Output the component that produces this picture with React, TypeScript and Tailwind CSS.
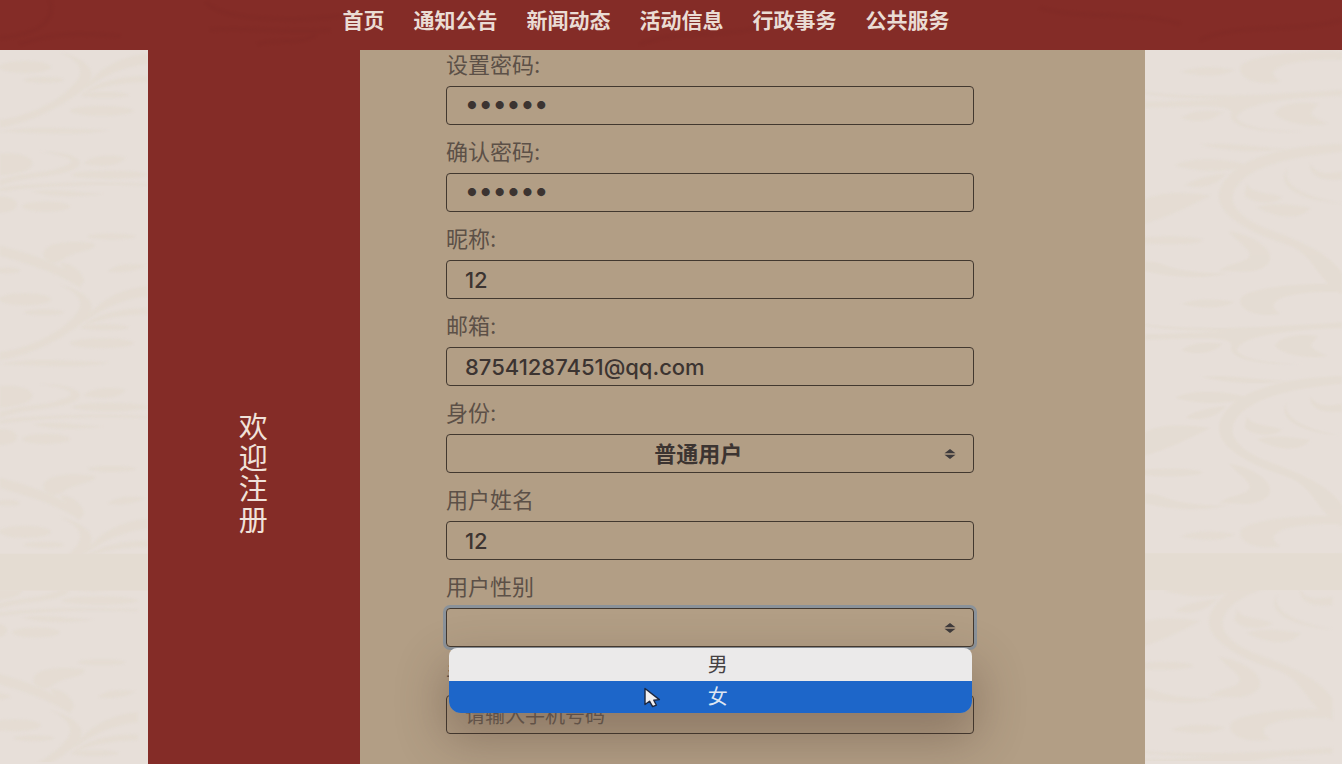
import { useState, type ReactNode } from "react";

const NAV = ["首页", "通知公告", "新闻动态", "活动信息", "行政事务", "公共服务"];

const CONTROL =
  "block h-[39px] w-full rounded border border-[#42382f] bg-transparent text-[#3c3431] outline-none";

function Field({ id, label, children }: { id: string; label: string; children: ReactNode }) {
  return (
    <div className="mb-[13px]">
      <label htmlFor={id} className="mb-[7px] block text-[22px] leading-7 text-[#5c5047]">
        {label}
      </label>
      {children}
    </div>
  );
}

function TextField({
  id,
  label,
  type = "text",
  initial = "",
  placeholder,
}: {
  id: string;
  label: string;
  type?: string;
  initial?: string;
  placeholder?: string;
}) {
  const [value, setValue] = useState(initial);
  const size = type === "password" ? "text-[26px] pb-1" : "text-[22px]";
  return (
    <Field id={id} label={label}>
      <input
        id={id}
        type={type}
        value={value}
        placeholder={placeholder}
        onChange={(e) => setValue(e.target.value)}
        className={`${CONTROL} ${size} px-[18px] font-medium placeholder:text-xl placeholder:font-normal placeholder:text-[#6b5e53]`}
      />
    </Field>
  );
}

function Chevrons() {
  return (
    <svg
      viewBox="0 0 12 12"
      className="pointer-events-none absolute top-1/2 right-[18px] h-3 w-3 -translate-y-1/2 fill-[#3f3b3c]"
      aria-hidden="true"
    >
      <path d="M6 1 11.5 5.2H.5Z" />
      <path d="M6 11 .5 6.8h11Z" />
    </svg>
  );
}

function LeftTile() {
  return (
    <g>
      <ellipse cx="25" cy="67" rx="26" ry="6" />
      <ellipse cx="44" cy="80" rx="20" ry="3" />
      <path d="M60 52C98 62 102 80 72 98C50 114 22 124 0 128V120C28 116 52 104 66 92C86 76 86 64 60 52Z" />
      <path d="M84 90C96 70 120 56 148 54V64C124 66 104 76 84 90Z" />
      <path d="M82 94C100 80 124 76 148 76V82C124 82 104 86 82 94Z" />
      <ellipse cx="105" cy="95" rx="24" ry="3" />
      <ellipse cx="102" cy="111" rx="32" ry="5" />
      <path d="M0 132C30 124 80 130 110 130C90 136 50 134 0 132Z" />
      <path d="M0 154C20 152 36 158 32 166C26 174 10 174 0 176Z" />
      <path d="M40 152C86 152 92 168 60 174C40 178 20 178 0 186V180C24 172 44 174 60 168C82 162 70 156 40 152Z" />
      <path d="M84 164C90 156 110 154 126 158C120 166 104 168 84 164Z" />
      <ellipse cx="110" cy="175" rx="38" ry="4" />
      <path d="M0 188C40 182 100 182 148 184V186C100 184 40 186 0 192Z" />
      <path d="M32 192C60 188 80 194 104 194C80 198 54 198 32 192Z" />
      <ellipse cx="2" cy="205" rx="15" ry="8" />
      <ellipse cx="46" cy="207" rx="24" ry="5" />
      <path d="M44 258C40 244 64 240 94 244C100 250 76 252 66 258C56 266 50 264 44 258Z" />
      <path d="M60 264C72 262 84 274 84 282C74 280 66 272 60 264Z" />
      <ellipse cx="112" cy="237" rx="24" ry="3" />
      <path d="M0 246C30 254 60 264 84 282L80 288C52 270 24 264 0 256Z" />
      <path d="M108 272C116 264 132 264 146 266C136 272 122 274 108 272Z" />
      <ellipse cx="8" cy="271" rx="12" ry="3" />
    </g>
  );
}

function RightTile() {
  return (
    <g>
      <path d="M36 72C50 66 70 66 90 70C76 78 52 76 36 72Z" />
      <path d="M96 66C104 56 150 50 198 52V60C140 58 116 70 136 82C112 86 92 78 96 66Z" />
      <path d="M0 92C40 98 120 96 198 90V96C130 98 96 106 92 118C98 128 130 132 160 132C120 134 86 128 86 116C92 104 60 106 0 108V102C30 102 60 100 80 99C50 99 20 98 0 94Z" />
      <path d="M36 118C48 110 64 110 78 112C68 122 50 124 36 118Z" />
      <path d="M130 114C136 102 160 102 174 104C168 112 158 114 184 124C160 128 138 122 130 114Z" />
      <path d="M56 145C86 142 110 148 144 149C110 154 80 151 56 145Z" />
      <path d="M30 166C44 158 80 158 104 166C80 174 50 172 30 166Z" />
      <path d="M198 144C128 146 78 164 74 196C74 218 108 234 144 246C170 256 170 278 198 296V274C184 252 150 240 124 230C98 220 82 206 90 190C104 164 156 156 198 152Z" />
      <path d="M40 186C52 178 66 176 82 174C72 186 56 190 40 186Z" />
      <path d="M0 200C22 190 46 194 66 196C42 208 22 218 0 224Z" />
      <path d="M102 184C106 194 120 192 138 198C128 206 108 204 100 196Z" />
      <path d="M112 208C126 202 150 206 166 208C160 218 140 222 112 208Z" />
      <path d="M144 168C134 184 160 198 198 204C160 202 128 188 144 168Z" />
      <path d="M166 164C172 176 184 174 198 172V180C180 182 164 178 166 164Z" />
      <ellipse cx="24" cy="241" rx="34" ry="4" />
      <path d="M84 232C110 236 132 252 124 264C112 278 86 270 74 272C84 262 110 264 104 252C98 244 90 240 84 232Z" />
      <path d="M0 262C24 262 18 274 86 274C50 282 18 276 0 272Z" />
    </g>
  );
}

function Texture({ side }: { side: "left" | "right" }) {
  const Tile = side === "left" ? LeftTile : RightTile;
  const width = side === "left" ? 148 : 198;
  return (
    <svg viewBox={`0 50 ${width} 714`} className="block h-auto w-full" fill="#e4dcd2" aria-hidden="true">
      <clipPath id={`${side}-upper`}>
        <rect x="0" y="50" width={width} height="505" />
      </clipPath>
      <clipPath id={`${side}-lower`}>
        <rect x="0" y="592" width={width} height="172" />
      </clipPath>
      <filter id={`${side}-soft`}>
        <feGaussianBlur stdDeviation="1" />
      </filter>
      <g clipPath={`url(#${side}-upper)`} opacity="0.85">
        <g filter={`url(#${side}-soft)`}>
          <Tile />
          <g transform="translate(0 233)">
            <Tile />
          </g>
          <g transform="translate(0 466)">
            <Tile />
          </g>
        </g>
      </g>
      <rect x="0" y="555" width={width} height="37" />
      <g clipPath={`url(#${side}-lower)`} opacity="0.85">
        <g filter={`url(#${side}-soft)`}>
          <g transform="translate(-10 427)">
            <Tile />
          </g>
          <g transform="translate(-10 660)">
            <Tile />
          </g>
        </g>
      </g>
    </svg>
  );
}

export default function App() {
  const [role, setRole] = useState("普通用户");
  const [gender, setGender] = useState("");
  const [open, setOpen] = useState(true);

  const pick = (value: string) => {
    setGender(value);
    setOpen(false);
  };

  return (
    <div className="flex h-screen flex-col overflow-hidden bg-[#e7dfd9] font-[Inter,'Noto_Sans_CJK_SC',sans-serif]">
      <header className="relative h-[50px] shrink-0 bg-[#842c27]">
        <svg
          viewBox="0 0 1342 50"
          preserveAspectRatio="none"
          className="absolute inset-0 h-full w-full fill-none stroke-[#7e2925] opacity-40 blur-[1px]"
          strokeWidth="4"
          aria-hidden="true"
        >
          <path d="M0 38C40 34 56 20 50 0M20 44C60 30 90 34 120 36M206 2C220 20 290 22 340 16M210 30C250 26 280 34 330 30M258 44C280 38 300 46 316 34M640 44C680 28 730 40 780 22M1040 8C1080 20 1140 10 1180 24M1200 40C1240 22 1290 34 1342 20" />
        </svg>
        <nav className="relative flex h-[42px] items-center justify-center gap-[29px] pr-[50px]">
          {NAV.map((item) => (
            <a key={item} href="#" className="text-[21px] leading-7 font-bold whitespace-nowrap text-[#eadcd4]">
              {item}
            </a>
          ))}
        </nav>
      </header>

      <main className="flex shrink-0">
        <div className="w-[11%]">
          <Texture side="left" />
        </div>
        <aside className="flex w-[15.8%] items-center justify-center bg-[#842c27]">
          <h1 className="w-[30px] text-[29px] leading-[31px] text-[#f0e2da]">欢迎注册</h1>
        </aside>
        <section className="w-[58.5%] bg-[#b29e85] pt-px pb-[151px]">
          <form className="ml-[11%] w-[67.3%]" onSubmit={(e) => e.preventDefault()}>
            <TextField id="password" label="设置密码:" type="password" initial="123456" />
            <TextField id="confirm" label="确认密码:" type="password" initial="123456" />
            <TextField id="nickname" label="昵称:" initial="12" />
            <TextField id="email" label="邮箱:" type="email" initial="87541287451@qq.com" />
            <Field id="role" label="身份:">
              <div className="relative">
                <select
                  id="role"
                  value={role}
                  onChange={(e) => setRole(e.target.value)}
                  className={`${CONTROL} appearance-none pr-10 pl-4 text-[22px] leading-7 font-bold [text-align-last:center]`}
                >
                  <option>普通用户</option>
                </select>
                <Chevrons />
              </div>
            </Field>
            <TextField id="fullname" label="用户姓名" initial="12" />
            <Field id="gender" label="用户性别">
              <div className="relative">
                <select
                  id="gender"
                  value={gender}
                  onChange={(e) => setGender(e.target.value)}
                  onMouseDown={(e) => {
                    e.preventDefault();
                    setOpen(!open);
                  }}
                  className={`${CONTROL} appearance-none pr-10 pl-4 text-[22px] leading-7 font-bold shadow-[0_0_0_3px_#8a929a] [text-align-last:center]`}
                >
                  <option value=""></option>
                  <option>男</option>
                  <option>女</option>
                </select>
                <Chevrons />
                {open && (
                  <div className="absolute top-full right-[2px] left-[3px] z-10 mt-px rounded-t-lg rounded-b-xl shadow-[0_22px_48px_6px_rgba(70,50,40,0.32)]">
                    <div className="overflow-hidden rounded-t-lg rounded-b-xl">
                      <button
                        type="button"
                        onClick={() => pick("男")}
                        className="block h-[33px] w-full bg-[#ebeaea] pl-3.5 text-center text-xl leading-8 text-[#454142]"
                      >
                        男
                      </button>
                      <button
                        type="button"
                        onClick={() => pick("女")}
                        className="block h-8 w-full bg-[#1d66c9] pl-3.5 text-center text-xl leading-8 text-[#dfe6f2]"
                      >
                        女
                      </button>
                    </div>
                    <svg
                      viewBox="0 0 18 22"
                      className="pointer-events-none absolute top-[39px] left-[37%] h-[22px] w-[18px]"
                      aria-hidden="true"
                    >
                      <path
                        d="M2 1.5V17.5L6.5 14.2L9.6 19.6L13.4 18.2L10.8 13.2L16.4 12.6Z"
                        fill="#f2f0f0"
                        stroke="#1c2740"
                        strokeWidth="1.4"
                        strokeLinejoin="round"
                      />
                    </svg>
                  </div>
                )}
              </div>
            </Field>
            <TextField id="phone" label="手机号码:" placeholder="请输入手机号码" />
          </form>
        </section>
        <div className="flex-1">
          <Texture side="right" />
        </div>
      </main>
    </div>
  );
}
